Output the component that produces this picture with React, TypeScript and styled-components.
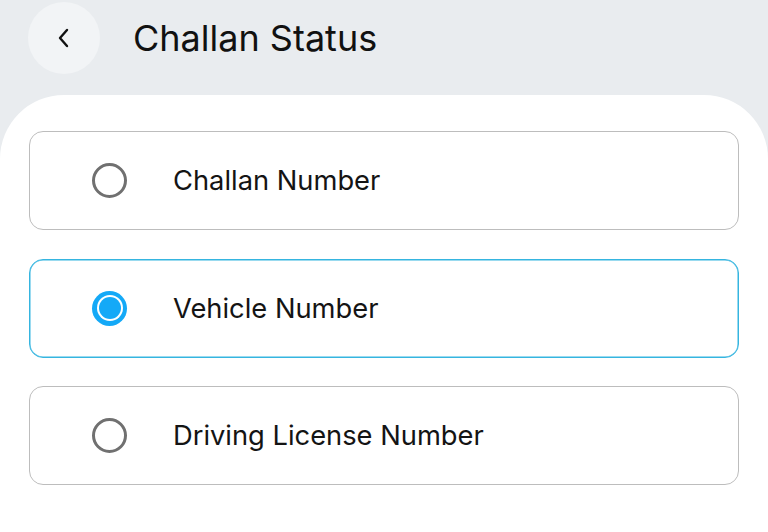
import React, { useState } from "react";
import styled, { createGlobalStyle } from "styled-components";

const GlobalStyle = createGlobalStyle`
  html, body {
    margin: 0;
    padding: 0;
    background: #e9ecef;
    font-family: Inter, "Noto Sans", sans-serif;
  }
`;

const Page = styled.div`
  width: 768px;
  height: 532px;
  overflow: hidden;
  display: flex;
  flex-direction: column;
  background: #e9ecef;
`;

const Header = styled.header`
  display: flex;
  align-items: center;
  gap: 33px;
  height: 95px;
  padding: 0 0 19px 28px;
  box-sizing: border-box;
`;

const BackButton = styled.button`
  width: 72px;
  height: 72px;
  border-radius: 50%;
  border: none;
  background: #f2f4f6;
  display: flex;
  align-items: center;
  justify-content: center;
  padding: 0;
  cursor: pointer;
`;

const Title = styled.h1`
  margin: 0;
  font-size: 36px;
  font-weight: 400;
  color: #111;
`;

const Sheet = styled.div`
  flex: 1;
  background: #fff;
  border-radius: 64px 64px 0 0;
  padding: 36px 29px 0 29px;
  display: flex;
  flex-direction: column;
  gap: 28.5px;
`;

const OptionCard = styled.label<{ $active: boolean }>`
  height: 99px;
  box-sizing: border-box;
  border-radius: 14px;
  border: 1.5px solid ${(p) => (p.$active ? "#35b5e0" : "#bdbdbd")};
  box-shadow: ${(p) => (p.$active ? "inset 0 0 0 0.5px #35b5e0" : "none")};
  display: flex;
  align-items: center;
  padding-left: 62px;
  gap: 46px;
  cursor: pointer;
`;

const Radio = styled.span<{ $active: boolean }>`
  width: 35px;
  height: 35px;
  box-sizing: border-box;
  border-radius: 50%;
  flex-shrink: 0;
  border: ${(p) => (p.$active ? "none" : "3.5px solid #707070")};
  background: ${(p) => (p.$active ? "#14a9f7" : "transparent")};
  display: flex;
  align-items: center;
  justify-content: center;

  &::after {
    content: "";
    display: ${(p) => (p.$active ? "block" : "none")};
    width: 22px;
    height: 22px;
    border-radius: 50%;
    background: #14a9f7;
    box-shadow: 0 0 0 2px #fff;
  }
`;

const Label = styled.span`
  font-size: 27.3px;
  color: #141414;
`;

const options = ["Challan Number", "Vehicle Number", "Driving License Number"];

export default function App() {
  const [selected, setSelected] = useState("Vehicle Number");
  return (
    <Page>
      <GlobalStyle />
      <Header>
        <BackButton aria-label="Back">
          <svg width="18" height="26" viewBox="0 0 18 26" fill="none">
            <path
              d="M12 5 L5 13 L12 21"
              stroke="#111"
              strokeWidth="2.4"
              strokeLinecap="round"
              strokeLinejoin="round"
            />
          </svg>
        </BackButton>
        <Title>Challan Status</Title>
      </Header>
      <Sheet>
        {options.map((o) => (
          <OptionCard key={o} $active={o === selected} onClick={() => setSelected(o)}>
            <Radio $active={o === selected} />
            <Label>{o}</Label>
          </OptionCard>
        ))}
      </Sheet>
    </Page>
  );
}
